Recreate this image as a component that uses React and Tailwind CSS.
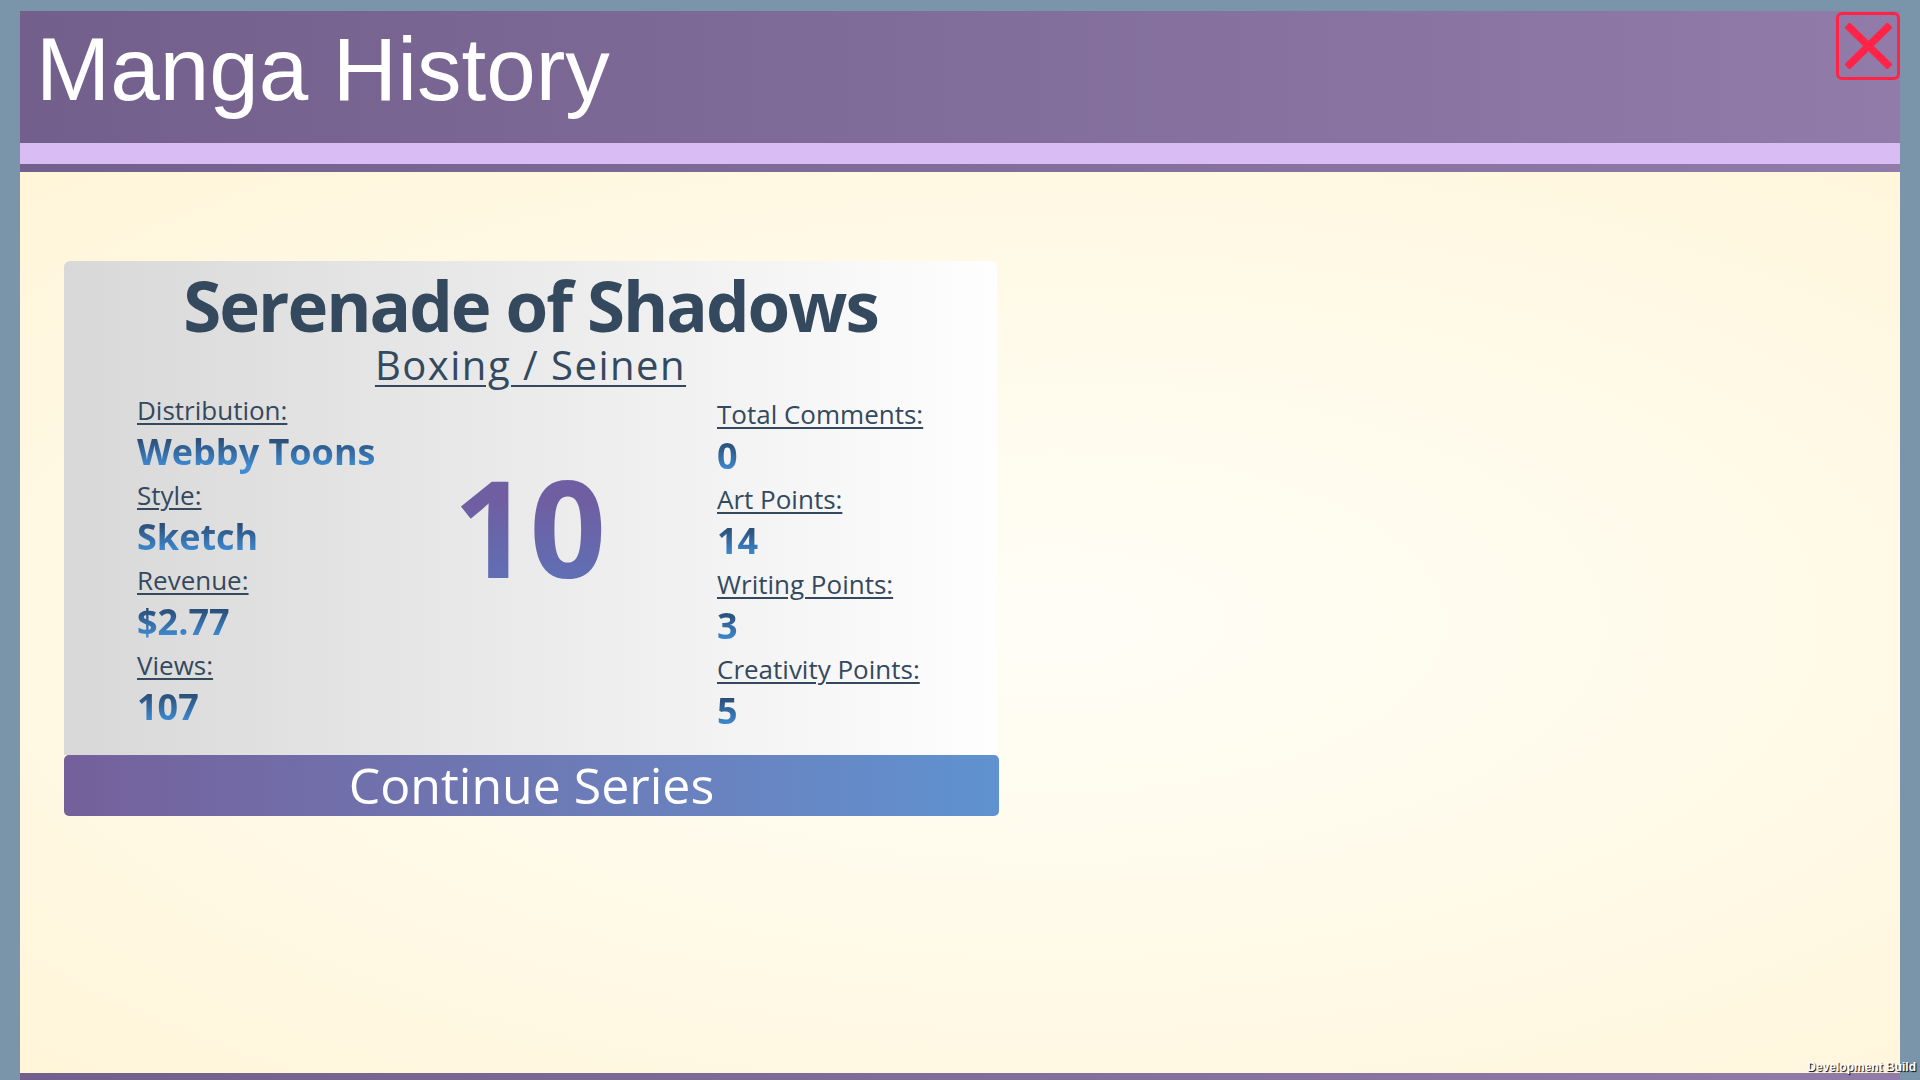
const leftStats = [
  { label: 'Distribution:', value: 'Webby Toons' },
  { label: 'Style:', value: 'Sketch' },
  { label: 'Revenue:', value: '$2.77' },
  { label: 'Views:', value: '107' },
];

const rightStats = [
  { label: 'Total Comments:', value: '0' },
  { label: 'Art Points:', value: '14' },
  { label: 'Writing Points:', value: '3' },
  { label: 'Creativity Points:', value: '5' },
];

const Stat = ({ label, value }) => (
  <div className="flex flex-col items-start">
    <span className="text-[26px] leading-[40px] text-[#34495e] underline underline-offset-[3px] decoration-[1.5px]">
      {label}
    </span>
    <span className="-mt-[1px] mb-[1px] text-[36px] leading-[45px] font-bold bg-[linear-gradient(180deg,#2a4b72_20%,#3f8cd6_84%)] bg-clip-text text-transparent">
      {value}
    </span>
  </div>
);

const CloseButton = () => (
  <button className="mt-[1px] w-[64px] h-[68px] border-[3px] border-[#ff2447] rounded-[6px] flex items-center justify-center">
    <svg width="47" height="46" viewBox="0 0 47 46">
      <path d="M2 2L45 44M45 2L2 44" stroke="#ff2447" strokeWidth="7.5" />
    </svg>
  </button>
);

export default function App() {
  return (
    <div className="w-[1920px] h-screen bg-[#7a94aa] pt-[11px] px-[20px] overflow-hidden relative">
      <div className="h-full flex flex-col">
        <div className="bg-gradient-to-r from-[#735f8b] to-[#917ca9] pb-[8px]">
          <div className="h-[132px] flex items-start justify-between">
            <h1 className="pl-[16px] pt-[14px] text-[89px] leading-[89px] text-white font-['Liberation_Sans',Arial,sans-serif]">
              Manga History
            </h1>
            <CloseButton />
          </div>
          <div className="h-[21px] bg-[#d9bcf3]" />
        </div>

        <div className="flex-1 bg-[radial-gradient(ellipse_at_55%_50%,#fffdf6_0%,#fffbec_40%,#fff5d9_100%)] pl-[44px] pt-[89px] font-['Open_Sans',sans-serif]">
          <div className="w-[935px]">
            <div className="w-[933px] h-[494px] rounded-t-[6px] bg-gradient-to-r from-[#d8d8d8] to-[#fefefe] pt-[9px]">
              <h2 className="text-center text-[69px] leading-[70px] tracking-[-2px] font-bold text-[#34495e]">
                Serenade of Shadows
              </h2>
              <div className="mt-[5px] text-center">
                <span className="text-[40px] leading-[40px] tracking-[1.5px] text-[#34495e] underline underline-offset-[5px] decoration-2">
                  Boxing / Seinen
                </span>
              </div>
              <div className="flex pl-[73px] mt-[4px]">
                <div className="w-[300px] flex flex-col">
                  {leftStats.map((s) => (
                    <Stat key={s.label} {...s} />
                  ))}
                </div>
                <div className="w-[190px] pt-[69px] pr-[5px] flex justify-center">
                  <span className="text-[134px] leading-[134px] font-bold bg-[linear-gradient(180deg,#6f5fa2_17%,#468ad4_89%)] bg-clip-text text-transparent">
                    10
                  </span>
                </div>
                <div className="ml-[90px] pt-[4px] flex flex-col">
                  {rightStats.map((s) => (
                    <Stat key={s.label} {...s} />
                  ))}
                </div>
              </div>
            </div>
            <button className="w-[935px] h-[61px] rounded-[5px] bg-gradient-to-r from-[#74609b] to-[#5f92d0] text-white text-[50px] leading-[61px] font-medium">
              Continue Series
            </button>
          </div>
        </div>

        <div className="h-[7px] bg-gradient-to-r from-[#735f8b] to-[#917ca9]" />
      </div>

      <span className="absolute right-[4px] bottom-[7px] text-[12px] leading-none font-bold text-white font-['Liberation_Sans',Arial,sans-serif] [text-shadow:1px_1px_1px_#000]">
        Development Build
      </span>
    </div>
  );
}
